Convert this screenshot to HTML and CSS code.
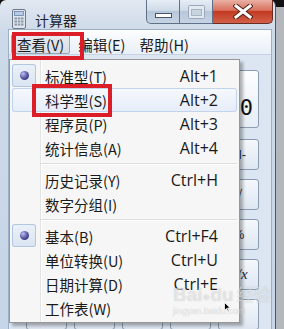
FILE: index.html
```html
<!DOCTYPE html>
<html>
<head>
<meta charset="utf-8">
<title>计算器</title>
<link rel="stylesheet" href="styles.css">
</head>
<body>
<div class="screen">

<div class="window">
  <div class="titlebar">
    <svg class="app-icon" width="14" height="20" viewBox="0 0 14 20">
      <rect x="0.5" y="0.5" width="13" height="19" rx="1.5" fill="#dfe5ec" stroke="#6d7b8d"/>
      <rect x="2.5" y="2.5" width="9" height="4" fill="#b7cde6" stroke="#6a86a8" stroke-width="0.8"/>
      <g fill="#8a98aa">
        <rect x="2.5" y="8.5" width="2.5" height="2"/><rect x="5.8" y="8.5" width="2.5" height="2"/><rect x="9" y="8.5" width="2.5" height="2"/>
        <rect x="2.5" y="11.5" width="2.5" height="2"/><rect x="5.8" y="11.5" width="2.5" height="2"/><rect x="9" y="11.5" width="2.5" height="2"/>
        <rect x="2.5" y="14.5" width="2.5" height="2"/><rect x="5.8" y="14.5" width="2.5" height="2"/><rect x="9" y="14.5" width="2.5" height="2"/>
      </g>
    </svg>
    <span class="title">计算器</span>
    <div class="caption">
      <span class="cap cap-min">
        <svg width="17" height="6" viewBox="0 0 17 6"><rect x="0.5" y="0.5" width="16" height="4" fill="#fff" stroke="#46556c"/></svg>
      </span>
      <span class="cap cap-max">
        <svg width="17" height="14" viewBox="0 0 17 14"><rect x="0.5" y="0.5" width="16" height="13" rx="1" fill="#e3e9f0" stroke="#9aa8ba"/><rect x="3.5" y="4.5" width="10" height="6" fill="#c9d4e1" stroke="#a7b4c5"/></svg>
      </span>
      <span class="cap cap-close">
        <svg width="20" height="15" viewBox="0 0 20 15">
          <path d="M3 2 L17 13 M17 2 L3 13" stroke="#52221b" stroke-width="5" stroke-linecap="square"/>
          <path d="M3 2 L17 13 M17 2 L3 13" stroke="#fff" stroke-width="3" stroke-linecap="square"/>
        </svg>
      </span>
    </div>
  </div>

  <div class="client">
    <div class="menubar">
      <span class="mb-item pressed">查看(V)</span>
      <span class="mb-item">编辑(E)</span>
      <span class="mb-item">帮助(H)</span>
    </div>
    <div class="calc">
      <div class="display"><span class="value">0</span></div>
      <!-- only the right column peeks out from under the open menu -->
      <div class="keys">
        <span class="key"></span><span class="key"></span><span class="key"></span><span class="key"></span><span class="key">M-</span>
        <span class="key"></span><span class="key"></span><span class="key"></span><span class="key"></span><span class="key">√</span>
        <span class="key"></span><span class="key"></span><span class="key"></span><span class="key"></span><span class="key">%</span>
        <span class="key"></span><span class="key"></span><span class="key"></span><span class="key"></span><span class="key italic">1/x</span>
        <span class="key"></span><span class="key"></span><span class="key"></span><span class="key"></span><span class="key"></span>
      </div>
    </div>
  </div>
</div>

<ul class="dropdown">
  <li class="item checked"><span class="gut"><i class="bullet"></i></span><span class="label">标准型(T)</span><span class="shortcut">Alt+1</span></li>
  <li class="item hover"><span class="gut"></span><span class="label">科学型(S)</span><span class="shortcut">Alt+2</span></li>
  <li class="item"><span class="gut"></span><span class="label">程序员(P)</span><span class="shortcut">Alt+3</span></li>
  <li class="item"><span class="gut"></span><span class="label">统计信息(A)</span><span class="shortcut">Alt+4</span></li>
  <li class="sep"></li>
  <li class="item"><span class="gut"></span><span class="label">历史记录(Y)</span><span class="shortcut">Ctrl+H</span></li>
  <li class="item"><span class="gut"></span><span class="label">数字分组(I)</span></li>
  <li class="sep"></li>
  <li class="item checked"><span class="gut"><i class="bullet"></i></span><span class="label">基本(B)</span><span class="shortcut">Ctrl+F4</span></li>
  <li class="item"><span class="gut"></span><span class="label">单位转换(U)</span><span class="shortcut">Ctrl+U</span></li>
  <li class="item"><span class="gut"></span><span class="label">日期计算(D)</span><span class="shortcut">Ctrl+E</span></li>
  <li class="item"><span class="gut"></span><span class="label">工作表(W)</span></li>
</ul>

<div class="mark mark-view"></div>
<div class="mark mark-sci"></div>

<div class="watermark">
  <span class="wm-logo">Bai<span class="paw">●</span>du</span><span class="wm-cn">经验</span>
  <div class="wm-url">jingyan.baidu.com</div>
</div>

<svg class="cursor" width="7" height="10" viewBox="0 0 7 10">
  <path d="M0.5 0.5 L0.5 8.5 L2.5 6.5 L4 9.5 L5 9 L3.6 6 L6.3 6 Z" fill="#000" stroke="#fff" stroke-width="0.8"/>
</svg>

</div>
</body>
</html>
```

FILE: styles.css
```css
* {
    box-sizing: border-box;
}
body {
    margin: 0;
    font-family: "Noto Sans CJK SC", sans-serif;
}
.screen {
    position: relative;
    width: 284px;
    height: 329px;
    overflow: hidden;
    display: flex;
    background: linear-gradient(#121212 0, #121212 7px, #b4b8bd 7px);
}

/* window frame */
.window {
    width: 276px;
    height: 329px;
    display: flex;
    flex-direction: column;
    padding: 0 3px 0 8px;
    border-right: 1px solid #4b596c;
    border-radius: 6px 6px 0 0;
    background: linear-gradient(#e1e8f1, #ccd9e8 34px, #c6d5e7);
}
.titlebar {
    height: 34px;
    display: flex;
    align-items: flex-start;
}
.app-icon {
    margin: 9px 0 0 4px;
}
.title {
    margin: 11px 0 0 9px;
    font-size: 14px;
    line-height: 18px;
    color: #1d2530;
}
.caption {
    margin-left: auto;
    margin-right: -1px;
    display: flex;
}
.cap {
    height: 24px;
    display: flex;
    align-items: center;
    justify-content: center;
    border: 1px solid #5f7088;
    border-top: none;
    background: linear-gradient(#e6edf5, #cfdbe8 45%, #b8c8db 50%, #c5d3e3);
}
.cap-min {
    width: 34px;
    align-items: flex-end;
    padding-bottom: 4px;
    border-radius: 0 0 0 5px;
}
.cap-max {
    width: 33px;
    border-left: none;
}
.cap-close {
    width: 60px;
    border-left: none;
    border-color: #6a2c22;
    border-radius: 0 0 5px 0;
    background: linear-gradient(#eab0a4, #d9705c 45%, #c23a22 50%, #d26048);
}

/* client area */
.client {
    flex: 1;
    display: flex;
    flex-direction: column;
    border: 1px solid #9dafc5;
    border-bottom: none;
    background: #dbe6f2;
}
.menubar {
    height: 25px;
    display: flex;
    align-items: flex-end;
    padding: 0 0 0 2px;
    background: linear-gradient(#fcfdfe, #e9eff7);
    border-bottom: 1px solid #c7d3e2;
}
.mb-item {
    height: 20px;
    margin-right: 2px;
    padding: 1px 5px 0;
    border: 1px solid transparent;
    font-size: 14.5px;
    line-height: 17px;
    color: #1b1b1b;
}
.mb-item.pressed {
    border-color: #99a6b6;
    border-radius: 2px;
    background: linear-gradient(#e8ebf0, #d8dee6);
}
.calc {
    flex: 1;
    display: flex;
    flex-direction: column;
    gap: 11px;
    padding: 15px 12px 0 12px;
}
.display {
    height: 58px;
    display: flex;
    align-items: flex-end;
    justify-content: flex-end;
    padding: 0 5px 8px 0;
    border: 1px solid #8c9cb2;
    border-radius: 3px;
    background: linear-gradient(#fdfeff, #e6edf6);
}
.value {
    font-family: "DejaVu Sans Mono", monospace;
    font-size: 22px;
    line-height: 22px;
    color: #111;
}
.keys {
    display: grid;
    grid-template-columns: repeat(5, 41px);
    grid-auto-rows: 31px;
    gap: 9px 7px;
    justify-content: end;
}
.key {
    display: flex;
    align-items: center;
    justify-content: center;
    border: 1px solid #8a9bb2;
    border-radius: 3px;
    background: linear-gradient(#f5f8fc, #dde6f1);
    font-family: "Liberation Sans", sans-serif;
    font-size: 13px;
    color: #1b2a3c;
}
.key.italic {
    font-family: "Liberation Serif", serif;
    font-style: italic;
    font-size: 15px;
}

/* dropdown menu */
.dropdown {
    position: absolute;
    left: 9px;
    top: 59px;
    width: 231px;
    margin: 0;
    padding: 4px 2px 2px 2px;
    list-style: none;
    border: 1px solid #979797;
    background-color: #f6f6f6;
    background-image: linear-gradient(90deg, transparent 30px, #e2e3e3 30px, #e2e3e3 31px, #fff 31px, #fff 32px, transparent 32px);
    box-shadow: 3px 3px 3px rgba(0, 0, 0, 0.3);
}
.item {
    height: 24px;
    display: flex;
    align-items: center;
    border-radius: 3px;
}
.item.hover {
    background: linear-gradient(#f6f9fd, #e5edf8);
    box-shadow: inset 0 0 0 1px #c2d4ec;
}
.gut {
    width: 24px;
    height: 23px;
    align-self: flex-start;
    display: flex;
    align-items: center;
    justify-content: center;
}
.item.checked .gut {
    border-radius: 3px;
    background: linear-gradient(#ebf1f9, #dae4f2);
    box-shadow: inset 0 0 0 1px #b4c6de;
}
.bullet {
    width: 9px;
    height: 9px;
    border-radius: 50%;
    background: radial-gradient(circle at 35% 32%, #c2c2ee 0, #6a6ab4 40%, #33337a 80%);
}
.label {
    margin-left: 9px;
    font-size: 14.5px;
    color: #1a1a1a;
}
.shortcut {
    margin-left: auto;
    padding-right: 19px;
    font-family: "Open Sans", sans-serif;
    font-size: 16px;
    color: #1a1a1a;
}
.sep {
    height: 8px;
    padding-top: 3px;
}
.sep::after {
    content: "";
    display: block;
    margin-left: 29px;
    border-top: 1px solid #dedede;
    border-bottom: 1px solid #fff;
}

/* annotation boxes */
.mark {
    position: absolute;
    border: 4px solid #dc1e28;
}
.mark-view {
    left: 12px;
    top: 32px;
    width: 72px;
    height: 28px;
}
.mark-sci {
    left: 32px;
    top: 84px;
    width: 80px;
    height: 33px;
}

/* watermark and pointer */
.watermark {
    position: absolute;
    left: 173px;
    top: 281px;
    color: rgba(255, 255, 255, 0.5);
    text-shadow: 0 0 1px rgba(90, 90, 90, 0.3);
    white-space: nowrap;
}
.wm-logo {
    font-family: "Liberation Sans", sans-serif;
    font-weight: bold;
    font-size: 19px;
}
.paw {
    font-size: 13px;
}
.wm-cn {
    margin-left: 3px;
    font-size: 17px;
}
.wm-url {
    font-family: "Liberation Sans", sans-serif;
    font-size: 9px;
    line-height: 10px;
}
.cursor {
    position: absolute;
    left: 224px;
    top: 302px;
}
```
